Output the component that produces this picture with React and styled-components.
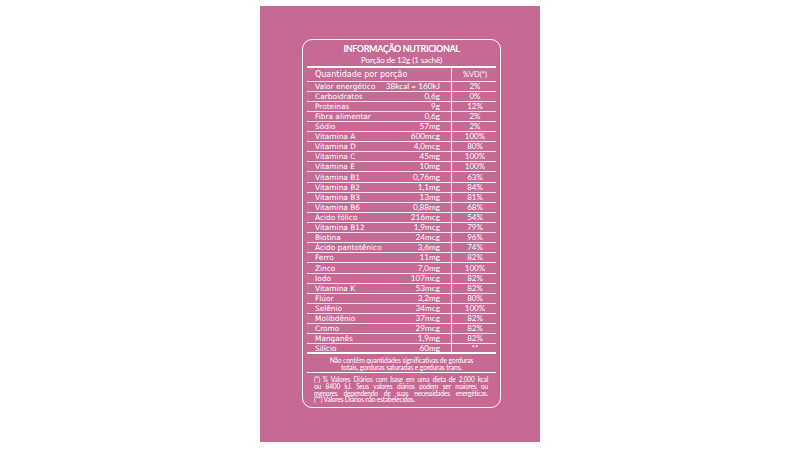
import React from "react";
import styled, { createGlobalStyle } from "styled-components";

const GlobalStyle = createGlobalStyle`
  html, body { margin: 0; padding: 0; background: #ffffff; }
  * { box-sizing: border-box; }
`;

const Page = styled.div`
  display: flex;
  justify-content: center;
  padding-top: 6px;
  width: 800px;
  height: 450px;
`;

const Panel = styled.div`
  width: 280px;
  height: 436px;
  background: #c66995;
  padding: 33px 39px 0 42px;
`;

const Card = styled.div`
  height: 368.5px;
  border: 1.5px solid #ffffff;
  border-radius: 10px;
  padding: 0 4px;
  display: flex;
  flex-direction: column;
  color: #ffffff;
`;

const Title = styled.div`
  margin-top: 3px;
  text-align: center;
  font-family: Lato, "Open Sans", sans-serif;
  font-weight: 700;
  font-size: 9px;
  line-height: 11px;
  letter-spacing: -0.4px;
`;

const Subtitle = styled.div`
  margin-top: 1px;
  text-align: center;
  font-family: Lato, "Open Sans", sans-serif;
  font-size: 8px;
  line-height: 11px;
  letter-spacing: -0.1px;
`;

const Table = styled.div`
  border-top: 2px solid #ffffff;
  display: flex;
  flex-direction: column;
`;

const Row = styled.div`
  display: grid;
  grid-template-columns: 1fr auto 45px;
  align-items: end;
  height: ${(p) => (p.$head ? "13.5px" : "10.12px")};
  border-bottom: ${(p) =>
    p.$last ? "2px solid #ffffff" : "1px solid rgba(255,255,255,0.85)"};
`;

const Label = styled.div`
  padding-left: 8px;
  font-family: "DejaVu Sans", Verdana, sans-serif;
  font-size: ${(p) => (p.$head ? "8px" : "7.4px")};
  line-height: ${(p) => (p.$head ? "12px" : "9px")};
  white-space: nowrap;
`;

const Value = styled.div`
  padding-right: 11px;
  text-align: right;
  font-family: Lato, "Open Sans", sans-serif;
  font-size: 8.2px;
  line-height: 9px;
  white-space: nowrap;
`;

const Vd = styled.div`
  align-self: stretch;
  display: flex;
  align-items: ${(p) => (p.$head ? "center" : "flex-end")};
  justify-content: center;
  border-left: 1px solid #ffffff;
  font-family: Lato, "Open Sans", sans-serif;
  font-size: ${(p) => (p.$head ? "7.5px" : "8px")};
  line-height: 9px;
  padding-left: 2px;
`;

const Note = styled.div`
  padding: 2.5px 0 1px;
  border-bottom: 1px solid #ffffff;
  text-align: center;
  font-family: Lato, "Open Sans", sans-serif;
  font-size: 6.8px;
  line-height: 7px;
  letter-spacing: -0.15px;
`;

const Foot = styled.div`
  padding: 3.5px 8px 0 7px;
  font-family: Lato, "Open Sans", sans-serif;
  font-size: 6.6px;
  line-height: 6.6px;
  letter-spacing: -0.2px;
`;

const FootLine = styled.div`
  text-align: ${(p) => (p.$last ? "left" : "justify")};
  text-align-last: ${(p) => (p.$last ? "left" : "justify")};
  white-space: nowrap;
  height: 6.6px;
`;

const rows = [
  ["Valor energético", "38kcal = 160kJ", "2%"],
  ["Carboidratos", "0,6g", "0%"],
  ["Proteinas", "9g", "12%"],
  ["Fibra alimentar", "0,6g", "2%"],
  ["Sódio", "57mg", "2%"],
  ["Vitamina A", "600mcg", "100%"],
  ["Vitamina D", "4,0mcg", "80%"],
  ["Vitamina C", "45mg", "100%"],
  ["Vitamina E", "10mg", "100%"],
  ["Vitamina B1", "0,76mg", "63%"],
  ["Vitamina B2", "1,1mg", "84%"],
  ["Vitamina B3", "13mg", "81%"],
  ["Vitamina B6", "0,88mg", "68%"],
  ["Ácido fólico", "216mcg", "54%"],
  ["Vitamina B12", "1,9mcg", "79%"],
  ["Biotina", "24mcg", "96%"],
  ["Ácido pantotênico", "3,6mg", "74%"],
  ["Ferro", "11mg", "82%"],
  ["Zinco", "7,0mg", "100%"],
  ["Iodo", "107mcg", "82%"],
  ["Vitamina K", "53mcg", "82%"],
  ["Flúor", "3,2mg", "80%"],
  ["Selênio", "34mcg", "100%"],
  ["Molibdênio", "37mcg", "82%"],
  ["Cromo", "29mcg", "82%"],
  ["Manganês", "1,9mg", "82%"],
  ["Silício", "60mg", "**"],
];

export default function App() {
  return (
    <>
      <GlobalStyle />
      <Page>
        <Panel>
          <Card>
            <Title>INFORMAÇÃO NUTRICIONAL</Title>
            <Subtitle>Porção de 12g (1 sachê)</Subtitle>
            <Table>
              <Row $head>
                <Label $head>Quantidade por porção</Label>
                <Value />
                <Vd $head>%VD(*)</Vd>
              </Row>
              {rows.map(([l, v, d], i) => (
                <Row key={l} $last={i === rows.length - 1}>
                  <Label>{l}</Label>
                  <Value>{v}</Value>
                  <Vd>{d}</Vd>
                </Row>
              ))}
            </Table>
            <Note>
              Não contêm quantidades significativas de gorduras
              <br />
              totais, gorduras saturadas e gorduras trans.
            </Note>
            <Foot>
              <FootLine>(*) % Valores Diários com base em uma dieta de 2.000 kcal</FootLine>
              <FootLine>ou 8400 kJ. Seus valores diários podem ser maiores ou</FootLine>
              <FootLine>menores dependendo de suas necessidades energéticas.</FootLine>
              <FootLine $last>(**) Valores Diários não estabelecidos.</FootLine>
            </Foot>
          </Card>
        </Panel>
      </Page>
    </>
  );
}
